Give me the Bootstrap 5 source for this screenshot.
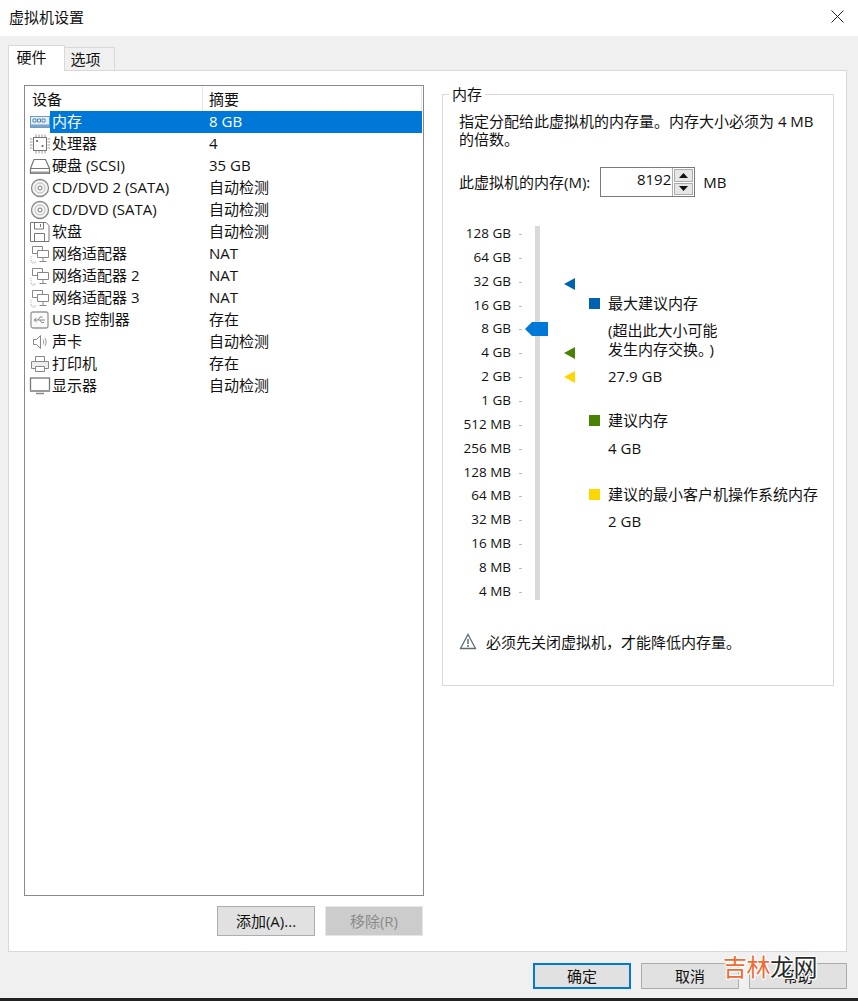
<!DOCTYPE html>
<html lang="zh"><head><meta charset="utf-8">
<link href="https://cdn.jsdelivr.net/npm/bootstrap@5.3.0/dist/css/bootstrap.min.css" rel="stylesheet">
<style>
html,body{height:100%}
body{width:858px;height:1001px;overflow:hidden;background:#f0f0f0;font-family:"Open Sans","Noto Sans CJK SC",sans-serif;font-size:15px;line-height:22px;color:#111;position:relative}
.vm-title{height:36px;background:#fff;padding:6px 9px 0}
.vm-close{position:absolute;left:831px;top:10px}
.vm-body{height:962px;padding:9px 11px 0 8px}
.vm-tabs{height:25px;align-items:flex-end}
.vm-tab{border:1px solid #d9d9d9;background:#f0f0f0;text-align:center;margin-bottom:-1px;width:51px;height:24px;line-height:22px;margin-left:-1px;padding-right:8px}
.vm-tab-on{background:#fff;border:1px solid #d9d9d9;border-bottom:0;width:57px;height:26px;margin:0 0 -1px;position:relative;z-index:1;line-height:22px;text-align:center;padding-right:10px}
.vm-panel{background:#fff;border:1px solid #d9d9d9;height:882px;padding:14px 0 0 15px}
.vm-left{width:400px}
.vm-list{height:811px;border:1px solid #888890;padding:1px 0 0 0;background:#fff;position:relative}
.vm-head{height:24px;padding-left:7px;line-height:24px;margin-right:1px}
.vm-h1{width:171px;border-right:1px solid #e5e5e5}
.vm-h2{padding-left:6px;flex:1;border-right:1px solid #e5e5e5}
.vm-row{height:22px;padding-left:4px;line-height:21px;margin-right:1px}
.vm-ico{width:23px;height:22px;flex:none}
.vm-name{width:157px;flex:none}
.vm-name-on,.vm-val-on{background:#0078d7;color:#fff}
.vm-name-on{width:159px;margin-left:-2px;padding-left:2px}
.vm-val{flex:1 1 auto}
.vm-btns{margin-top:10px;gap:10px;padding-right:1px}
.vm-btn{width:98px;height:30px;border:1px solid #adadad;background:#e1e1e1;color:#111;text-align:center;line-height:28px;padding:0;border-radius:0;font:inherit}
.vm-btn-off{background:#cccccc;border-color:#e6e6e6;color:#8a8a8a}
.vm-group{margin:9px 0 0 18px;width:392px;height:592px;border:1px solid #d9d9d9;position:relative;padding:17px 0 0 16px}
.vm-legend{position:absolute;left:6px;top:-11px;background:#fff;padding:0 3px;line-height:20px}
.vm-desc{width:364px;line-height:18px}
.vm-mem{margin-top:19px;height:30px}
.vm-input{width:95px;height:30px;border:1px solid #7a7a7a;margin-left:10px;margin-right:8px;display:flex}
.vm-input-num{flex:1;text-align:right;line-height:23px;padding-right:1px}
.vm-spin{width:22px;border-left:1px solid #adadad;padding:1px;display:flex;flex-direction:column}
.vm-spin i{display:flex;flex:1;background:#e6e6e6;border:1px solid #adadad;align-items:center;justify-content:center}
.vm-spin i+i{margin-top:1px}
.vm-slide{margin-top:25px}
.vm-scale{width:76px;flex:none;position:relative;font-size:13.5px}
.vm-tick{height:23.87px;line-height:23.87px;text-align:right;position:relative;width:52px;white-space:nowrap}
.vm-tick::after{content:"";position:absolute;left:60px;top:12px;width:3px;height:1px;background:#bbb}
.vm-rail{position:relative;width:5px;height:374px;background:#d9d9d9;margin-top:4px;flex:none}
.vm-mark{position:absolute}
.vm-legendcol{margin-left:49px;padding-top:70px;width:240px}
.vm-sq{width:11px;height:11px;margin-right:8px;flex:none}
.vm-lt{padding-left:19px}
.vm-m7{margin-top:7px;line-height:19px}
.vm-m6{margin-top:6px}
.vm-m5{margin-top:5px}
.vm-m22{margin-top:22px}
.vm-m24{margin-top:24px}
.vm-warn{margin-top:27px;gap:9px}
.vm-foot{height:38px;padding-top:11px;gap:10px;justify-content:flex-end}
.vm-foot .vm-btn{height:26px;line-height:24px}
.vm-default{border:2px solid #0078d7;line-height:22px!important}
.vm-bar{height:3px;background:#222;position:absolute;left:0;right:0;top:998px}
.vm-wm{position:absolute;left:723px;top:950px;font-size:24px;line-height:32px;font-family:"Noto Sans CJK SC",sans-serif;letter-spacing:-.5px;white-space:nowrap;text-shadow:1px 0 1px #fff,-1px 0 1px #fff,0 1px 1px #fff,0 -1px 1px #fff,1px 1px 1px #fff,-1px -1px 1px #fff,1px -1px 1px #fff,-1px 1px 1px #fff}
.vm-wm b{font-weight:400;color:#f26a32}
.vm-wm span{color:#2b2b2b}
</style></head><body>
<div class="vm-title">虚拟机设置</div>
<svg class="vm-close" width="13" height="13" viewBox="0 0 13 13"><path d="M.5.5l12 12M12.500.5l-12 12" stroke="#222" fill="none"/></svg>
<div class="vm-body">
<div class="d-flex vm-tabs"><div class="vm-tab-on">硬件</div><div class="vm-tab">选项</div></div>
<div class="vm-panel d-flex">
 <div class="vm-left">
  <div class="vm-list">
   <div class="d-flex vm-head"><div class="vm-h1">设备</div><div class="vm-h2">摘要</div></div>
   <div class="d-flex vm-row"><svg class="vm-ico" viewBox="0 0 23 22"><rect x="1.500" y="5.500" width="19" height="11" fill="#e4eff8" stroke="#6f9ec4"/><path d="M4 8h3v3H4zM8.500 8h3v3h-3zM13 8h3v3h-3z" fill="#fff" stroke="#4f86b3"/><path d="M2 13.500h18v2.500H2z" fill="#7aa5c9"/></svg><div class="vm-name vm-name-on">内存</div><div class="vm-val vm-val-on">8 GB</div></div>
   <div class="d-flex vm-row"><svg class="vm-ico" viewBox="0 0 23 22"><rect x="4.500" y="4.500" width="13" height="13" fill="#fff" stroke="#777"/><circle cx="8" cy="8" r="1" fill="#555"/><circle cx="13.500" cy="13" r="1" fill="#555"/><path d="M1 6h2.500M1 9h2.500M1 12h2.500M1 15h2.500M18.500 6h2.500M18.500 9h2.500M18.500 12h2.500M18.500 15h2.500M7 1.500v2.500M10 1.500v2.500M13 1.500v2.500M16 1.500v2.500M7 18v2.500M10 18v2.500M13 18v2.500M16 18v2.500" stroke="#999"/></svg><div class="vm-name">处理器</div><div class="vm-val">4</div></div>
   <div class="d-flex vm-row"><svg class="vm-ico" viewBox="0 0 23 22"><path d="M1.500 13.500L5 4.500h11.500l4 9v5h-19z" fill="#fff" stroke="#777" stroke-width="1.200"/><path d="M1.500 13.500h19" stroke="#777"/><path d="M2 17.500h18" stroke="#999" stroke-width="2"/></svg><div class="vm-name">硬盘 (SCSI)</div><div class="vm-val">35 GB</div></div>
   <div class="d-flex vm-row"><svg class="vm-ico" viewBox="0 0 23 22"><circle cx="11" cy="11" r="8.500" fill="#f4f4f4" stroke="#888" stroke-width="1.300"/><circle cx="11" cy="11" r="5" fill="none" stroke="#bbb"/><circle cx="11" cy="11" r="2" fill="#fff" stroke="#777"/></svg><div class="vm-name">CD/DVD 2 (SATA)</div><div class="vm-val">自动检测</div></div>
   <div class="d-flex vm-row"><svg class="vm-ico" viewBox="0 0 23 22"><circle cx="11" cy="11" r="8.500" fill="#f4f4f4" stroke="#888" stroke-width="1.300"/><circle cx="11" cy="11" r="5" fill="none" stroke="#bbb"/><circle cx="11" cy="11" r="2" fill="#fff" stroke="#777"/></svg><div class="vm-name">CD/DVD (SATA)</div><div class="vm-val">自动检测</div></div>
   <div class="d-flex vm-row"><svg class="vm-ico" viewBox="0 0 23 22"><path d="M1.500 1.500h15.500l3 3v16h-18.500z" fill="#fff" stroke="#777"/><path d="M5.500 2v6h9V2M11.500 3v3M5.500 20v-7.500h10V20" fill="none" stroke="#777"/></svg><div class="vm-name">软盘</div><div class="vm-val">自动检测</div></div>
   <div class="d-flex vm-row"><svg class="vm-ico" viewBox="0 0 23 22"><path d="M3.500 3.500h10v7h-10z" fill="#fff" stroke="#888"/><path d="M8.500 7.500h11v7h-11zM14 15v3M10.500 18.500h7" fill="#fff" stroke="#888"/><path d="M2 13v6h6M3 20h4" stroke="#bbb" stroke-dasharray="1 1" fill="none"/></svg><div class="vm-name">网络适配器</div><div class="vm-val">NAT</div></div>
   <div class="d-flex vm-row"><svg class="vm-ico" viewBox="0 0 23 22"><path d="M3.500 3.500h10v7h-10z" fill="#fff" stroke="#888"/><path d="M8.500 7.500h11v7h-11zM14 15v3M10.500 18.500h7" fill="#fff" stroke="#888"/><path d="M2 13v6h6M3 20h4" stroke="#bbb" stroke-dasharray="1 1" fill="none"/></svg><div class="vm-name">网络适配器 2</div><div class="vm-val">NAT</div></div>
   <div class="d-flex vm-row"><svg class="vm-ico" viewBox="0 0 23 22"><path d="M3.500 3.500h10v7h-10z" fill="#fff" stroke="#888"/><path d="M8.500 7.500h11v7h-11zM14 15v3M10.500 18.500h7" fill="#fff" stroke="#888"/><path d="M2 13v6h6M3 20h4" stroke="#bbb" stroke-dasharray="1 1" fill="none"/></svg><div class="vm-name">网络适配器 3</div><div class="vm-val">NAT</div></div>
   <div class="d-flex vm-row"><svg class="vm-ico" viewBox="0 0 23 22"><rect x="2" y="3" width="17" height="16" rx="2" fill="#fafafa" stroke="#999" stroke-width="1.300"/><path d="M5 11h11M7.500 9l-2.500 2 2.500 2M9 11l2-3h2.500M11 11l1.500 2.500H15" fill="none" stroke="#888"/></svg><div class="vm-name">USB 控制器</div><div class="vm-val">存在</div></div>
   <div class="d-flex vm-row"><svg class="vm-ico" viewBox="0 0 23 22"><path d="M4.500 8.500h3l4-4v13l-4-4h-3z" fill="#fff" stroke="#888"/><path d="M14 8.500c1 1.500 1 3.500 0 5M16 7c1.500 2.500 1.500 5.500 0 8" fill="none" stroke="#999"/></svg><div class="vm-name">声卡</div><div class="vm-val">自动检测</div></div>
   <div class="d-flex vm-row"><svg class="vm-ico" viewBox="0 0 23 22"><path d="M6.500 3.500h9v5h-9z" fill="#fff" stroke="#888"/><path d="M2.500 8.500h17v7h-17z" fill="#eee" stroke="#888"/><path d="M6.500 13.500h9v5h-9z" fill="#fff" stroke="#888"/></svg><div class="vm-name">打印机</div><div class="vm-val">存在</div></div>
   <div class="d-flex vm-row"><svg class="vm-ico" viewBox="0 0 23 22"><rect x="1.500" y="3" width="19" height="13" fill="#fff" stroke="#777" stroke-width="1.300"/><path d="M1 15h20v2H1z" fill="#999"/><path d="M7 18.500h8" stroke="#888" stroke-width="1.500"/></svg><div class="vm-name">显示器</div><div class="vm-val">自动检测</div></div>
  </div>
  <div class="d-flex justify-content-end vm-btns"><button class="vm-btn">添加(A)...</button><button class="vm-btn vm-btn-off">移除(R)</button></div>
 </div>
 <div class="vm-group">
  <div class="vm-legend">内存</div>
  <div class="vm-desc">指定分配给此虚拟机的内存量。内存大小必须为 4 MB 的倍数。</div>
  <div class="d-flex align-items-center vm-mem">此虚拟机的内存(M):<div class="vm-input"><div class="vm-input-num">8192</div><div class="vm-spin"><i><svg width="9" height="5"><path d="M4.500 0L9 5H0z" fill="#111"/></svg></i><i><svg width="9" height="5"><path d="M0 0h9L4.500 5z" fill="#111"/></svg></i></div></div>MB</div>
  <div class="d-flex vm-slide">
   <div class="vm-scale">
    <div class="vm-tick">128 GB</div><div class="vm-tick">64 GB</div><div class="vm-tick">32 GB</div><div class="vm-tick">16 GB</div><div class="vm-tick">8 GB</div><div class="vm-tick">4 GB</div><div class="vm-tick">2 GB</div><div class="vm-tick">1 GB</div><div class="vm-tick">512 MB</div><div class="vm-tick">256 MB</div><div class="vm-tick">128 MB</div><div class="vm-tick">64 MB</div><div class="vm-tick">32 MB</div><div class="vm-tick">16 MB</div><div class="vm-tick">8 MB</div><div class="vm-tick">4 MB</div>
   </div>
   <div class="vm-rail">
    <svg class="vm-mark" style="left:29px;top:52px" width="12" height="12"><path d="M0 6L11 0v12z" fill="#0063b1"/></svg>
    <svg class="vm-mark" style="left:-10px;top:96px" width="23" height="14"><path d="M0 7L7 0h16v14H7z" fill="#0078d7"/></svg>
    <svg class="vm-mark" style="left:29px;top:121px" width="12" height="12"><path d="M0 6L11 0v12z" fill="#498205"/></svg>
    <svg class="vm-mark" style="left:29px;top:145px" width="12" height="12"><path d="M0 6L11 0v12z" fill="#ffd700"/></svg>
   </div>
   <div class="vm-legendcol">
    <div class="d-flex align-items-center"><div class="vm-sq" style="background:#0063b1"></div>最大建议内存</div>
    <div class="vm-lt vm-m7">(超出此大小可能<br>发生内存交换。<span class="ms-1">&#41;</span></div>
    <div class="vm-lt vm-m6">27.9 GB</div>
    <div class="d-flex align-items-center vm-m22"><div class="vm-sq" style="background:#498205"></div>建议内存</div>
    <div class="vm-lt vm-m6">4 GB</div>
    <div class="d-flex align-items-center vm-m24"><div class="vm-sq" style="background:#ffd700"></div><span class="text-nowrap">建议的最小客户机操作系统内存</span></div>
    <div class="vm-lt vm-m5">2 GB</div>
   </div>
  </div>
  <div class="d-flex align-items-center vm-warn"><svg width="18" height="17" viewBox="0 0 18 17"><path d="M9 1.500L16.500 15.500h-15z" fill="#fff" stroke="#5f6b73" stroke-width="1.300"/><path d="M9 6v5M9 12v2" stroke="#5f6b73" stroke-width="1.500"/></svg><span>必须先关闭虚拟机&#xFF0C;才能降低内存量。</span></div>
 </div>
</div>
<div class="d-flex vm-foot"><button class="vm-btn vm-default">确定</button><button class="vm-btn">取消</button><button class="vm-btn">帮助</button></div>
</div>
<div class="vm-bar"></div>
<div class="vm-wm"><b>吉林</b><span>龙网</span></div>
<script src="https://cdn.jsdelivr.net/npm/bootstrap@5.3.0/dist/js/bootstrap.bundle.min.js"></script>
</body></html>
